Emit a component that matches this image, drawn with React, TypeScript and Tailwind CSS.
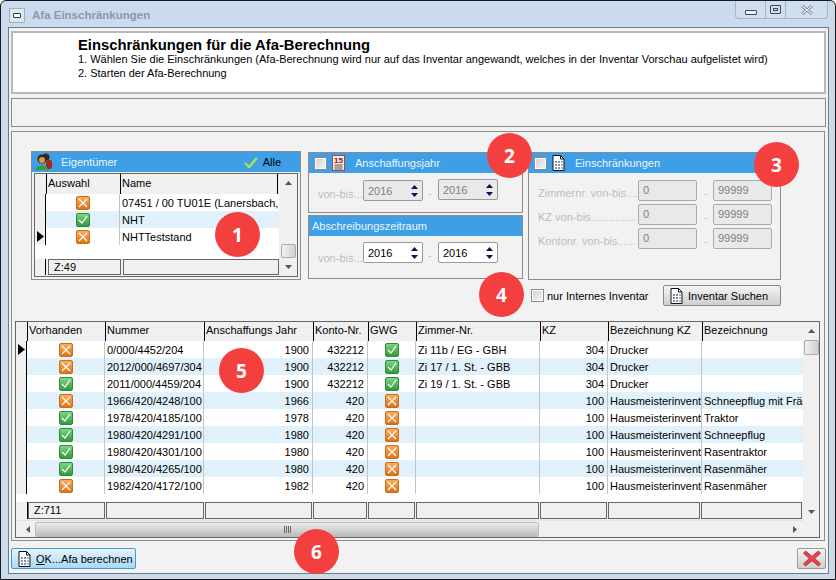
import type { ReactNode } from "react";

const rows = [
  { on: false, nr: "0/000/4452/204", jahr: "1900", konto: "432212", gwg: true, zi: "Zi 11b / EG - GBH", kz: "304", bkz: "Drucker", bez: "" },
  { on: false, nr: "2012/000/4697/304", jahr: "1900", konto: "432212", gwg: true, zi: "Zi 17 / 1. St. - GBB", kz: "304", bkz: "Drucker", bez: "" },
  { on: true, nr: "2011/000/4459/204", jahr: "1900", konto: "432212", gwg: true, zi: "Zi 19 / 1. St. - GBB", kz: "304", bkz: "Drucker", bez: "" },
  { on: false, nr: "1966/420/4248/100", jahr: "1966", konto: "420", gwg: false, zi: "", kz: "100", bkz: "Hausmeisterinvent", bez: "Schneepflug mit Fräs" },
  { on: true, nr: "1978/420/4185/100", jahr: "1978", konto: "420", gwg: false, zi: "", kz: "100", bkz: "Hausmeisterinvent", bez: "Traktor" },
  { on: true, nr: "1980/420/4291/100", jahr: "1980", konto: "420", gwg: false, zi: "", kz: "100", bkz: "Hausmeisterinvent", bez: "Schneepflug" },
  { on: true, nr: "1980/420/4301/100", jahr: "1980", konto: "420", gwg: false, zi: "", kz: "100", bkz: "Hausmeisterinvent", bez: "Rasentraktor" },
  { on: true, nr: "1980/420/4265/100", jahr: "1980", konto: "420", gwg: false, zi: "", kz: "100", bkz: "Hausmeisterinvent", bez: "Rasenmäher" },
  { on: false, nr: "1982/420/4172/100", jahr: "1982", konto: "420", gwg: false, zi: "", kz: "100", bkz: "Hausmeisterinvent", bez: "Rasenmäher" },
];

const headers = ["Vorhanden", "Nummer", "Anschaffungs Jahr", "Konto-Nr.", "GWG", "Zimmer-Nr.", "KZ", "Bezeichnung KZ", "Bezeichnung"];
const footerWidths = ["w-[77px]", "w-[98px]", "w-[108px]", "w-[54px]", "w-[47px]", "w-[123px]", "w-[67px]", "w-[93px]", "w-[101px]"];

function StateIcon({ on }: { on: boolean }) {
  if (on) {
    return (
      <span className="flex h-[14px] w-[14px] items-center justify-center rounded-[2px] border border-[#2f8a3a] bg-gradient-to-b from-[#7fd583] to-[#2f9a3c]">
        <svg width="10" height="9" viewBox="0 0 10 9">
          <path d="M1 5 L4 8 L9 1" fill="none" stroke="#fff" strokeWidth="1.2" />
        </svg>
      </span>
    );
  }
  return (
    <span className="flex h-[14px] w-[14px] items-center justify-center rounded-[2px] border border-[#cf6c14] bg-gradient-to-b from-[#f8ad5c] to-[#dd7415]">
      <svg width="10" height="10" viewBox="0 0 10 10">
        <path d="M1 1 L9 9 M9 1 L1 9" fill="none" stroke="#fff" strokeWidth="1.1" />
      </svg>
    </span>
  );
}

function Arrow({ dir, color = "#555" }: { dir: "up" | "down" | "left" | "right"; color?: string }) {
  const pts = { up: "0,4 7,4 3.5,0", down: "0,0 7,0 3.5,4", left: "4,0 4,7 0,3.5", right: "0,0 0,7 4,3.5" }[dir];
  const vertical = dir === "up" || dir === "down";
  return (
    <svg width={vertical ? 7 : 4} height={vertical ? 4 : 7} viewBox={vertical ? "0 0 7 4" : "0 0 4 7"}>
      <polygon points={pts} fill={color} />
    </svg>
  );
}

function RowPointer() {
  return (
    <svg width="7" height="11" viewBox="0 0 7 11">
      <polygon points="0,0 7,5.5 0,11" fill="#000" />
    </svg>
  );
}

function BuildingDoc() {
  return (
    <svg width="13" height="16" viewBox="0 0 13 16">
      <path d="M1 .5 H8.5 L12 4 V15.5 H1 Z" fill="#fff" stroke="#111" />
      <path d="M8.5 .5 V4 H12" fill="none" stroke="#111" />
      <rect x="3" y="6" width="2" height="2" fill="#7f93ad" />
      <rect x="6" y="6" width="2" height="2" fill="#7f93ad" />
      <rect x="9" y="6" width="2" height="2" fill="#a9b7c9" />
      <rect x="3" y="9" width="2" height="2" fill="#7f93ad" />
      <rect x="6" y="9" width="2" height="2" fill="#7f93ad" />
      <rect x="9" y="9" width="2" height="2" fill="#a9b7c9" />
      <rect x="3" y="12" width="2" height="2" fill="#7f93ad" />
      <rect x="6" y="12" width="2" height="2" fill="#7f93ad" />
      <rect x="9" y="12" width="2" height="2" fill="#a9b7c9" />
    </svg>
  );
}

function CalendarIcon() {
  return (
    <svg width="13" height="16" viewBox="0 0 13 16">
      <rect x=".5" y=".5" width="12" height="15" fill="#f3e9e2" stroke="#b0473c" />
      <text x="6.5" y="8" textAnchor="middle" fontSize="8" fontWeight="700" fill="#8c1a10" fontFamily="Liberation Sans">15</text>
      <path d="M2.5 10 H10.5 M2.5 12 H10.5 M2.5 14 H10.5" stroke="#555" />
    </svg>
  );
}

function PeopleIcon() {
  return (
    <svg width="18" height="18" viewBox="0 0 18 18">
      <circle cx="11" cy="4" r="3.5" fill="#3b2a1c" />
      <rect x="11" y="7" width="6" height="9" rx="2" fill="#a8281f" />
      <circle cx="7" cy="6" r="4.5" fill="#33281d" />
      <circle cx="7" cy="7" r="3" fill="#e59a3a" />
      <path d="M1 17 C1 11 13 11 13 17 Z" fill="#3f9a3a" />
    </svg>
  );
}

function CheckBox() {
  return <span className="block h-[13px] w-[13px] shrink-0 border border-[#8a8a8a] bg-gradient-to-br from-[#d0d0d0] to-[#f6f6f6] shadow-[inset_0_0_0_1px_#fff]" />;
}

function Spinner({ value, disabled, className }: { value: string; disabled?: boolean; className?: string }) {
  return (
    <div className={`flex h-[21px] w-[60px] items-center justify-between rounded-[2px] border border-[#999] pl-[4px] pr-[4px] ${disabled ? "bg-[#e9e9e9] text-[#808080]" : "bg-white text-black"} ${className ?? ""}`}>
      <span>{value}</span>
      <span className="flex flex-col gap-[4px]">
        <Arrow dir="up" color="#0a1450" />
        <Arrow dir="down" color="#0a1450" />
      </span>
    </div>
  );
}

function GroupHeader({ children }: { children: ReactNode }) {
  return <div className="flex h-[20px] items-center bg-[#3f9fe6] text-[#eaf4fc]">{children}</div>;
}

function RangeField({ label, to }: { label: string; to: string }) {
  return (
    <div className="flex h-[21px] items-start">
      <span className="w-[100px] overflow-hidden whitespace-nowrap pt-[6px] text-[#b9bdc4]">{label}</span>
      <span className="flex h-[21px] w-[59px] items-center rounded-[2px] border border-[#aaa] bg-[#e9e9e9] pb-[2px] pl-[4px] text-[#808080]">0</span>
      <span className="w-[16px] pl-[7px] pt-[6px] text-[#b9bdc4]">-</span>
      <span className="flex h-[21px] w-[59px] items-center rounded-[2px] border border-[#aaa] bg-[#e9e9e9] pb-[2px] pl-[4px] text-[#808080]">{to}</span>
    </div>
  );
}

function Badge({ n, className }: { n: number; className: string }) {
  return (
    <div className={`absolute flex h-[45px] w-[45px] items-center justify-center rounded-full bg-[#f43f3f] font-['Noto_Sans',sans-serif] text-[19px] font-bold text-white ${className}`}>
      {n}
    </div>
  );
}

export default function App() {
  return (
    <div className="relative h-[580px] w-[836px] overflow-hidden rounded-t-[6px] border border-[#1a1a1a] bg-[#c9dbec] font-['Liberation_Sans',sans-serif] text-[11px] leading-[14px] text-black">
      {/* Titelleiste */}
      <div className="flex h-[26px] items-start">
        <div className="ml-[8px] mt-[7px] flex h-[15px] w-[16px] items-center justify-center border border-[#9fb0c2] bg-[#dce8f3]">
          <span className="block h-[5px] w-[8px] rounded-[1px] border border-[#333] bg-white" />
        </div>
        <span className="ml-[7px] mt-[7px] text-[11.5px] font-bold text-[#8b99aa]">Afa Einschränkungen</span>
        <div className="ml-auto mr-[7px] flex h-[18px] w-[93px] rounded-b-[4px] border border-t-0 border-[#a5b6c8] bg-[#cfdfee]">
          <div className="flex w-[30px] items-end justify-center border-r border-[#a5b6c8] pb-[3px]">
            <span className="block h-[5px] w-[12px] rounded-[1px] border border-[#3c4854] bg-[#eef4f9]" />
          </div>
          <div className="flex w-[20px] items-center justify-center border-r border-[#a5b6c8]">
            <span className="flex h-[9px] w-[11px] items-center justify-center rounded-[1px] border border-[#3c4854]">
              <span className="block h-[3px] w-[5px] border border-[#3c4854]" />
            </span>
          </div>
          <div className="flex flex-1 items-center justify-center">
            <svg width="12" height="10" viewBox="0 0 12 10">
              <path d="M1 1 L11 9 M11 1 L1 9" stroke="#5a6875" strokeWidth="2.6" />
              <path d="M1 1 L11 9 M11 1 L1 9" stroke="#f2f6fa" strokeWidth="1.2" />
            </svg>
          </div>
        </div>
      </div>

      {/* Fensterinhalt */}
      <div className="ml-[7px] h-[547px] w-[821px] border border-[#6f7b86] bg-[#f2f2f2] px-[2px] pt-[3px]">
        <div className="h-[63px] border-2 border-[#b9b9b9] bg-white pl-[65px] pt-[5px]">
          <div className="text-[14.8px] font-bold leading-[14px]">Einschränkungen für die Afa-Berechnung</div>
          <div className="leading-[14px]">1. Wählen Sie die Einschränkungen (Afa-Berechnung wird nur auf das Inventar angewandt, welches in der Inventar Vorschau aufgelistet wird)</div>
          <div className="leading-[14px]">2. Starten der Afa-Berechnung</div>
        </div>
        <div className="mt-[4px] h-[29px] border border-[#8c8c8c] bg-[#f2f2f2]" />

        <div className="mt-[4px] h-[410px] w-[814px] border border-[#8c8c8c] px-[3px] pt-[19px]">
          <div className="flex pl-[16px]">
            {/* Eigentümer */}
            <div className="h-[129px] w-[270px] border border-[#8c8c8c]">
              <div className="flex h-[20px] items-center bg-[#3f9fe6] pl-[3px] pr-[19px] text-[#eaf4fc]">
                <PeopleIcon />
                <span className="ml-[8px]">Eigentümer</span>
                <svg className="ml-auto" width="14" height="11" viewBox="0 0 14 11">
                  <path d="M1 6 L5 10 L13 1" fill="none" stroke="#a6e05c" strokeWidth="2.4" />
                </svg>
                <span className="ml-[5px] text-black">Alle</span>
              </div>
              <div className="mx-[2px] mt-[1px] flex h-[104px] border border-[#666] bg-white">
                <div className="flex w-[244px] flex-col">
                  <div className="grid h-[20px] grid-cols-[11px_74px_158px] bg-[#f0f0f0]">
                    <span />
                    <span className="border-l border-black pl-[1px] pt-[2px]">Auswahl</span>
                    <span className="border-x border-black pl-[1px] pt-[2px]">Name</span>
                  </div>
                  {[
                    { on: false, name: "07451 / 00 TU01E (Lanersbach,", bg: "bg-white" },
                    { on: true, name: "NHT", bg: "bg-[#e0f1fb]" },
                    { on: false, name: "NHTTeststand", bg: "bg-white" },
                  ].map((r, i) => (
                    <div key={r.name} className={`grid h-[17px] grid-cols-[11px_74px_158px] ${r.bg}`}>
                      <span className="flex items-center justify-end border-r border-black bg-[#f0f0f0] pr-[1px]">
                        {i === 2 && <RowPointer />}
                      </span>
                      <span className="flex items-center justify-center border-r border-[#c4c4c4]"><StateIcon on={r.on} /></span>
                      <span className="overflow-hidden whitespace-nowrap pl-[2px] pt-[2px]">{r.name}</span>
                    </div>
                  ))}
                  <div className="flex-1" />
                  <div className="flex h-[17px] gap-[2px] bg-[#f0f0f0] pb-[1px]">
                    <span className="w-[11px] border-r border-black" />
                    <span className="w-[73px] border border-[#666] pl-[5px]">Z:49</span>
                    <span className="flex-1 border border-[#666]" />
                  </div>
                </div>
                <div className="flex h-full flex-1 flex-col items-center bg-[#f0f0f0]">
                  <span className="flex h-[18px] items-center"><Arrow dir="up" /></span>
                  <span className="mt-[52px] block h-[15px] w-[15px] rounded-[2px] border border-[#aaa] bg-gradient-to-r from-[#f2f2f2] to-[#cfcfcf]" />
                  <span className="flex-1" />
                  <span className="flex h-[18px] items-center"><Arrow dir="down" /></span>
                </div>
              </div>
            </div>

            {/* Anschaffungsjahr + Abschreibungszeitraum */}
            <div className="ml-[7px] flex w-[215px] flex-col gap-[2px] pt-[1px]">
              <div className="h-[61px] border border-[#8c8c8c]">
                <GroupHeader>
                  <span className="ml-[5px]"><CheckBox /></span>
                  <span className="ml-[5px]"><CalendarIcon /></span>
                  <span className="ml-[10px]">Anschaffungsjahr</span>
                </GroupHeader>
                <div className="flex pl-[9px] pt-[7px]">
                  <span className="w-[45px] overflow-hidden whitespace-nowrap pt-[7px] text-[#b9bdc4]">von-bis...</span>
                  <Spinner value="2016" disabled />
                  <span className="w-[15px] pl-[5px] pt-[6px] text-[#b9bdc4]">-</span>
                  <Spinner value="2016" disabled className="-mt-[1px]" />
                </div>
              </div>
              <div className="h-[64px] border border-[#8c8c8c]">
                <GroupHeader>
                  <span className="pl-[3px]">Abschreibungszeitraum</span>
                </GroupHeader>
                <div className="flex pl-[9px] pt-[6px]">
                  <span className="w-[45px] overflow-hidden whitespace-nowrap pt-[9px] text-[#b9bdc4]">von-bis...</span>
                  <Spinner value="2016" />
                  <span className="w-[15px] pl-[5px] pt-[6px] text-[#b9bdc4]">-</span>
                  <Spinner value="2016" />
                </div>
              </div>
            </div>

            {/* Einschränkungen */}
            <div className="ml-[5px] mt-[1px] h-[128px] w-[253px] border border-[#8c8c8c]">
              <GroupHeader>
                <span className="ml-[5px]"><CheckBox /></span>
                <span className="ml-[5px]"><BuildingDoc /></span>
                <span className="ml-[10px]">Einschränkungen</span>
              </GroupHeader>
              <div className="flex flex-col gap-[3px] pl-[9px] pt-[7px]">
                <RangeField label="Zimmernr. von-bis...." to="99999" />
                <RangeField label="KZ von-bis..............." to="99999" />
                <RangeField label="Kontonr. von-bis......" to="99999" />
              </div>
            </div>
          </div>

          <div className="mt-[5px] flex h-[21px] w-[766px] items-center pl-[516px]">
            <CheckBox />
            <span className="ml-[3px]">nur Internes Inventar</span>
            <button className="ml-auto flex h-[21px] w-[118px] items-center rounded-[2px] border border-[#888] bg-gradient-to-b from-[#f4f4f4] to-[#cfcfcf] pl-[6px]">
              <BuildingDoc />
              <span className="ml-[5px] whitespace-nowrap">Inventar Suchen</span>
            </button>
          </div>

          {/* Tabelle */}
          <div className="mt-[15px] flex h-[217px] w-[805px] border border-[#666] bg-white">
            <div className="flex w-[787px] flex-col">
              <div className="grid h-[19px] grid-cols-[11px_78px_99px_109px_55px_48px_124px_68px_94px_101px] bg-[#f0f0f0]">
                <span />
                {headers.map((h) => (
                  <span key={h} className="overflow-hidden whitespace-nowrap border-l border-black pl-[1px] pt-[1px]">{h}</span>
                ))}
              </div>
              {rows.map((r, i) => (
                <div key={r.nr} className={`grid h-[17px] grid-cols-[11px_78px_99px_109px_55px_48px_124px_68px_94px_101px] ${i % 2 ? "bg-[#e0f1fb]" : "bg-white"}`}>
                  <span className="flex items-center justify-end border-r border-black bg-[#f0f0f0] pr-[1px]">
                    {i === 0 && <RowPointer />}
                  </span>
                  <span className="flex items-center justify-center border-r border-[#c4c4c4]"><StateIcon on={r.on} /></span>
                  <span className="border-r border-[#c4c4c4] pl-[2px] pt-[2px]">{r.nr}</span>
                  <span className="border-r border-[#c4c4c4] pr-[3px] pt-[2px] text-right">{r.jahr}</span>
                  <span className="border-r border-[#c4c4c4] pr-[3px] pt-[2px] text-right">{r.konto}</span>
                  <span className="flex items-center justify-center border-r border-[#c4c4c4]"><StateIcon on={r.gwg} /></span>
                  <span className="border-r border-[#c4c4c4] pl-[2px] pt-[2px]">{r.zi}</span>
                  <span className="border-r border-[#c4c4c4] pr-[3px] pt-[2px] text-right">{r.kz}</span>
                  <span className="overflow-hidden whitespace-nowrap border-r border-[#c4c4c4] pl-[2px] pt-[2px]">{r.bkz}</span>
                  <span className="whitespace-nowrap pl-[2px] pt-[2px]">{r.bez}</span>
                </div>
              ))}
              <div className="h-[8px]" />
              <div className="flex h-[18px] bg-[#f0f0f0] pb-[1px]">
                <span className="w-[12px] border-r border-black" />
                {footerWidths.map((w, i) => (
                  <span key={w + i} className={`${w} mr-[1px] border border-[#666] pl-[5px]`}>{i === 0 ? "Z:711" : ""}</span>
                ))}
              </div>
              <div className="flex h-[17px] items-center border-t border-[#e2e2e2] bg-[#f0f0f0]">
                <span className="flex w-[19px] justify-end pr-[5px]"><Arrow dir="left" /></span>
                <div className="flex h-[15px] w-[504px] items-center justify-center rounded-[2px] border border-[#bbb] bg-gradient-to-b from-[#ececec] to-[#bcbcbc]">
                  <span className="h-[7px] w-[7px] bg-[repeating-linear-gradient(90deg,#666_0_1px,transparent_1px_2px)]" />
                </div>
                <span className="flex-1" />
                <span className="pr-[6px]"><Arrow dir="right" /></span>
              </div>
            </div>
            <div className="z-10 flex h-full flex-1 flex-col items-center bg-[#f0f0f0]">
              <span className="flex h-[18px] items-center"><Arrow dir="up" /></span>
              <span className="block h-[15px] w-[15px] rounded-[2px] border border-[#aaa] bg-gradient-to-r from-[#f2f2f2] to-[#cfcfcf]" />
              <span className="flex-1" />
              <span className="mb-[16px] flex h-[18px] items-center"><Arrow dir="down" /></span>
            </div>
          </div>
        </div>

        {/* Fußleiste */}
        <div className="mt-[7px] flex justify-between">
          <button className="flex h-[21px] w-[125px] items-center rounded-[2px] border border-[#3a9fd0] bg-gradient-to-b from-[#e6f4fc] to-[#a9d8f5] pl-[6px]">
            <BuildingDoc />
            <span className="ml-[5px] whitespace-nowrap"><span className="underline">O</span>K...Afa berechnen</span>
          </button>
          <button className="flex h-[21px] w-[29px] items-center justify-center rounded-[2px] border border-[#999] bg-gradient-to-b from-[#f4f4f4] to-[#cfcfcf]">
            <svg width="20" height="17" viewBox="0 0 18 16">
              <path d="M3 1 L9 6 L15 1 L17 3 L11.5 8 L17 13 L15 15 L9 10 L3 15 L1 13 L6.5 8 L1 3 Z" fill="#e8454a" stroke="#a5252a" strokeWidth="0.8" />
            </svg>
          </button>
        </div>
      </div>

      <Badge n={1} className="left-[214px] top-[211px]" />
      <Badge n={2} className="left-[486px] top-[132px]" />
      <Badge n={3} className="left-[753px] top-[141px]" />
      <Badge n={4} className="left-[478px] top-[271px]" />
      <Badge n={5} className="left-[218px] top-[347px]" />
      <Badge n={6} className="left-[293px] top-[528px]" />
    </div>
  );
}
